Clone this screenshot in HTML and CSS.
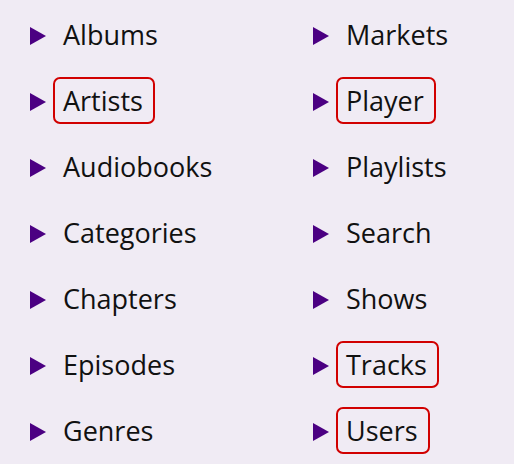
FILE: index.html
```html
<!DOCTYPE html>
<html lang="en">
<head>
<meta charset="utf-8">
<title>API categories</title>
<link rel="stylesheet" href="styles.css">
</head>
<body>
<ul class="menu">
  <li class="item"><svg class="tri" viewBox="0 0 16 18"><polygon points="0,0 16,9 0,18"/></svg><span class="label">Albums</span></li>
  <li class="item"><svg class="tri" viewBox="0 0 16 18"><polygon points="0,0 16,9 0,18"/></svg><span class="label hl">Artists</span></li>
  <li class="item"><svg class="tri" viewBox="0 0 16 18"><polygon points="0,0 16,9 0,18"/></svg><span class="label">Audiobooks</span></li>
  <li class="item"><svg class="tri" viewBox="0 0 16 18"><polygon points="0,0 16,9 0,18"/></svg><span class="label">Categories</span></li>
  <li class="item"><svg class="tri" viewBox="0 0 16 18"><polygon points="0,0 16,9 0,18"/></svg><span class="label">Chapters</span></li>
  <li class="item"><svg class="tri" viewBox="0 0 16 18"><polygon points="0,0 16,9 0,18"/></svg><span class="label">Episodes</span></li>
  <li class="item"><svg class="tri" viewBox="0 0 16 18"><polygon points="0,0 16,9 0,18"/></svg><span class="label">Genres</span></li>
  <li class="item"><svg class="tri" viewBox="0 0 16 18"><polygon points="0,0 16,9 0,18"/></svg><span class="label">Markets</span></li>
  <li class="item"><svg class="tri" viewBox="0 0 16 18"><polygon points="0,0 16,9 0,18"/></svg><span class="label hl">Player</span></li>
  <li class="item"><svg class="tri" viewBox="0 0 16 18"><polygon points="0,0 16,9 0,18"/></svg><span class="label">Playlists</span></li>
  <li class="item"><svg class="tri" viewBox="0 0 16 18"><polygon points="0,0 16,9 0,18"/></svg><span class="label">Search</span></li>
  <li class="item"><svg class="tri" viewBox="0 0 16 18"><polygon points="0,0 16,9 0,18"/></svg><span class="label">Shows</span></li>
  <li class="item"><svg class="tri" viewBox="0 0 16 18"><polygon points="0,0 16,9 0,18"/></svg><span class="label hl">Tracks</span></li>
  <li class="item"><svg class="tri" viewBox="0 0 16 18"><polygon points="0,0 16,9 0,18"/></svg><span class="label hl">Users</span></li>
</ul>
</body>
</html>
```
FILE: styles.css
```css
html, body {
  margin: 0;
  padding: 0;
  background: #f0ebf4;
}
body {
  font-family: "Open Sans", "Liberation Sans", sans-serif;
  color: #111111;
}
.menu {
  list-style: none;
  margin: 0;
  padding: 11px 0 0 30px;
  display: grid;
  grid-template-columns: 283px 180px;
  grid-template-rows: repeat(7, 47px);
  grid-auto-flow: column;
  row-gap: 19px;
}
.item {
  display: flex;
  align-items: center;
  gap: 7px;
}
.tri {
  width: 16px;
  height: 18px;
  fill: #4b0082;
  flex: none;
  margin-top: 2px;
}
.label {
  font-size: 27px;
  line-height: 43px;
  padding: 0 10px 0 8px;
  border: 2px solid transparent;
  border-radius: 7px;
}
.label.hl {
  border-color: #d10000;
}
```
